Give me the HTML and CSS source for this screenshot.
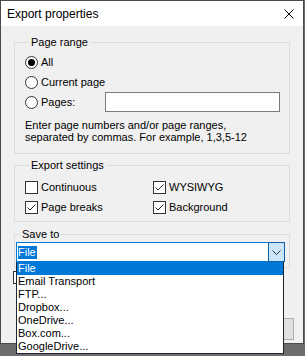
FILE: index.html
```html
<!DOCTYPE html>
<html lang="en">

<head>
    <meta charset="UTF-8">
    <meta name="viewport" content="width=device-width, initial-scale=1.0">
    <title>Export properties</title>
    <link rel="stylesheet" href="styles.css">
</head>

<body>
    <div class="window">
        <div class="titlebar">
            <span class="title">Export properties</span>
            <svg class="close" width="10" height="10" viewBox="0 0 10 10">
                <path d="M0.5 0.5 L9.5 9.5 M9.5 0.5 L0.5 9.5" stroke="#000" stroke-width="1" fill="none" />
            </svg>
        </div>
        <div class="content">
            <fieldset class="group range">
                <legend>Page range</legend>
                <div class="row"><span class="radio checked"></span>All</div>
                <div class="row"><span class="radio"></span>Current page</div>
                <div class="row">
                    <span class="pages-label"><span class="radio"></span>Pages:</span>
                    <span class="textbox"></span>
                </div>
                <p class="hint">Enter page numbers and/or page ranges,<br>separated by commas. For example, 1,3,5-12</p>
            </fieldset>

            <fieldset class="group settings">
                <legend>Export settings</legend>
                <div class="checks">
                    <div class="row"><span class="check"></span>Continuous</div>
                    <div class="row"><span class="check on"></span>WYSIWYG</div>
                    <div class="row"><span class="check on"></span>Page breaks</div>
                    <div class="row"><span class="check on"></span>Background</div>
                </div>
            </fieldset>

            <fieldset class="group save">
                <legend>Save to</legend>
                <div class="combo">
                    <div class="field"><span class="sel">File</span></div>
                    <div class="drop-btn">
                        <svg width="9" height="5" viewBox="0 0 9 5">
                            <path d="M0.5 0.5 L4.5 4.5 L8.5 0.5" stroke="#333" stroke-width="1" fill="none" />
                        </svg>
                    </div>
                    <ul class="droplist">
                        <li class="active">File</li>
                        <li>Email Transport</li>
                        <li>FTP...</li>
                        <li>Dropbox...</li>
                        <li>OneDrive...</li>
                        <li>Box.com...</li>
                        <li>GoogleDrive...</li>
                    </ul>
                </div>
            </fieldset>

            <div class="row open-row"><span class="check"></span>Open after export</div>

            <div class="buttons">
                <button class="btn">OK</button>
                <button class="btn">Cancel</button>
            </div>
        </div>
    </div>
</body>

</html>
```

FILE: styles.css
```css
html,
body {
    min-height: 100vh;
}

body {
    margin: 0;
    background: #6d6d6d;
    font-family: "Liberation Sans", Arial, sans-serif;
    font-size: 11px;
    color: #000;
}

.window {
    width: 302px;
    height: 342px;
    border: 1px solid #4a4a4a;
    background: #f0f0f0;
}

.titlebar {
    height: 25px;
    background: #fff;
    display: flex;
    align-items: center;
    justify-content: space-between;
    padding: 0 9px 0 6px;
    font-size: 12px;
}

.content {
    padding: 9px 13px 0 13px;
}

.group {
    margin: 0;
    padding: 0;
    min-width: 0;
    border: 1px solid #dcdcdc;
}

.group legend {
    margin-left: 4px;
    padding: 0 2px;
    line-height: 14px;
}

.row {
    display: flex;
    align-items: center;
    height: 20px;
}

.range {
    padding: 3px 0 10px 10px;
}

.radio {
    width: 13px;
    height: 13px;
    box-sizing: border-box;
    border: 1px solid #333;
    border-radius: 50%;
    background: #fff;
    margin-right: 3px;
    display: flex;
    align-items: center;
    justify-content: center;
}

.radio.checked::after {
    content: "";
    width: 7px;
    height: 7px;
    border-radius: 50%;
    background: #000;
}

.pages-label {
    display: flex;
    align-items: center;
    width: 80px;
}

.textbox {
    width: 175px;
    height: 20px;
    box-sizing: border-box;
    border: 1px solid #7a7a7a;
    background: #fff;
}

.hint {
    margin: 7px 0 0;
    line-height: 12px;
}

.settings {
    margin-top: 4px;
    padding: 5px 0 4px 10px;
}

.checks {
    display: grid;
    grid-template-columns: 128px auto;
}

.check {
    width: 13px;
    height: 13px;
    box-sizing: border-box;
    border: 1px solid #333;
    background: #fff;
    margin-right: 3px;
}

.check.on {
    background: #fff url("data:image/svg+xml;utf8,<svg xmlns='http://www.w3.org/2000/svg' width='11' height='11'><path d='M1.5 5.5 L4 8 L9.5 2.5' stroke='%23333' stroke-width='1' fill='none'/></svg>") no-repeat center;
}

.save {
    margin-top: 5px;
    padding: 1px 4px 5px 1px;
}

.combo {
    position: relative;
    display: flex;
    height: 20px;
}

.field {
    flex: 1;
    box-sizing: border-box;
    border: 1px solid #0078d7;
    border-right: none;
    background: #fff;
    display: flex;
    align-items: center;
    padding-left: 1px;
}

.sel {
    background: #0078d7;
    color: #fff;
    line-height: 13px;
    padding: 0 1px 0 0;
}

.drop-btn {
    width: 17px;
    box-sizing: border-box;
    border: 1px solid #0e5ea8;
    background: #cce4f7;
    display: flex;
    align-items: center;
    justify-content: center;
}

.droplist {
    position: absolute;
    top: 100%;
    left: 0;
    z-index: 5;
    width: 268px;
    box-sizing: border-box;
    margin: 0;
    padding: 0;
    list-style: none;
    background: #fff;
    border: 1px solid #1d2733;
    border-top: none;
}

.droplist li {
    line-height: 13px;
    padding-left: 1px;
}

.droplist li.active {
    background: #0078d7;
    color: #fff;
}

.open-row {
    height: 15px;
    margin: 2px 0 0 -1px;
}

.buttons {
    display: flex;
    justify-content: flex-end;
    gap: 8px;
    margin: 33px -4px 0 0;
}

.btn {
    width: 75px;
    height: 22px;
    border: 1px solid #adadad;
    background: #e1e1e1;
    font: inherit;
}
```
